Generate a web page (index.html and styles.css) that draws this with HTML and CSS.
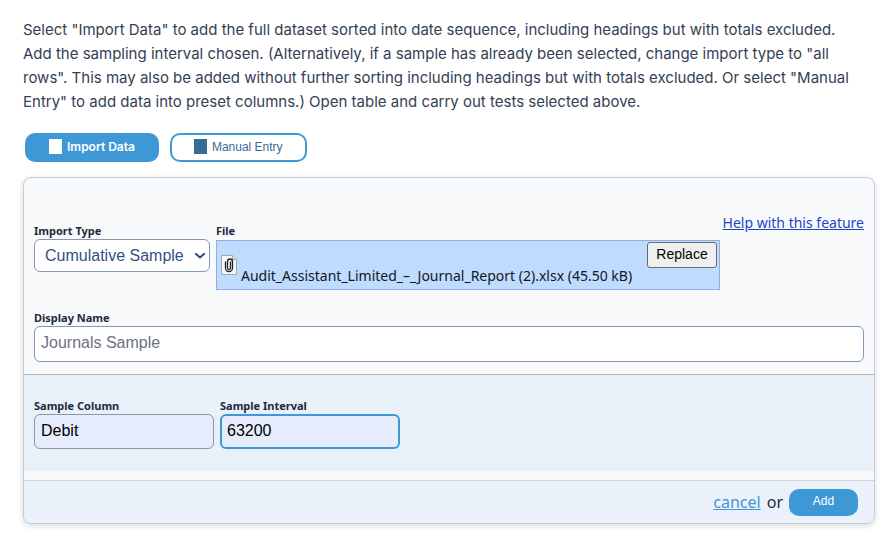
FILE: index.html
```html
<!doctype html>
<html lang="en">
  <head>
    <meta charset="UTF-8" />
    <meta name="viewport" content="width=device-width, initial-scale=1.0" />
    <title>Import Data</title>
    <link rel="stylesheet" href="styles.css">
  </head>
  <body>
    <p class="intro">
      Select "Import Data" to add the full dataset sorted into date sequence, including headings but with totals excluded.<br>
      Add the sampling interval chosen. (Alternatively, if a sample has already been selected, change import type to "all<br>
      rows". This may also be added without further sorting including headings but with totals excluded. Or select "Manual<br>
      Entry" to add data into preset columns.) Open table and carry out tests selected above.
    </p>

    <div class="tabs">
      <button type="button" class="tab active"><span class="tab-icon"></span>Import Data</button>
      <button type="button" class="tab"><span class="tab-icon"></span>Manual Entry</button>
    </div>

    <form class="panel">
      <div class="panel-body">
        <div class="row">
          <div class="field field-type">
            <label for="importType">Import Type</label>
            <div class="select-wrap">
              <select id="importType">
                <option>Cumulative Sample</option>
                <option>All Rows</option>
              </select>
              <svg class="chevron" width="10" height="6" viewBox="0 0 10 6" fill="none" stroke="#2c4a7c" stroke-width="2" stroke-linecap="round" stroke-linejoin="round"><path d="M1 1l4 3.500 4-3.500" /></svg>
            </div>
          </div>
          <div class="field field-file">
            <span class="label">File</span>
            <div class="file-box">
              <svg class="file-icon" width="16" height="20" viewBox="0 0 16 20">
                <path d="M.5.5h11l4 4v15H.5z" fill="#f7f7f7" stroke="#a5a8ad" />
                <path d="M11.5.5v4h4" fill="#ddd" stroke="#a5a8ad" />
                <path d="M4.500 7v6a3.500 3.500 0 0 0 7 0V6.500a2.500 2.500 0 0 0-5 0V13a1.500 1.500 0 0 0 3 0V7" fill="none" stroke="#222" stroke-width="1.300" stroke-linecap="round" />
              </svg>
              <span class="file-name">Audit_Assistant_Limited_–_Journal_Report (2).xlsx (45.50 kB)</span>
              <button type="button" class="replace">Replace</button>
            </div>
          </div>
          <a class="help" href="#help">Help with this feature</a>
        </div>
        <div class="field">
          <label for="displayName">Display Name</label>
          <input type="text" id="displayName" placeholder="Journals Sample">
        </div>
      </div>

      <!-- Sampling options -->
      <div class="sampling">
        <div class="field field-sample">
          <label for="sampleColumn">Sample Column</label>
          <input type="text" id="sampleColumn" value="Debit">
        </div>
        <div class="field field-sample">
          <label for="sampleInterval">Sample Interval</label>
          <input type="text" id="sampleInterval" class="focused" value="63200">
        </div>
      </div>

      <div class="actions">
        <a class="cancel" href="#cancel">cancel</a>
        <span>or</span>
        <button type="submit" class="add">Add</button>
      </div>
    </form>
  </body>
</html>
```
FILE: styles.css
```css
* { box-sizing: border-box; }
body {
  margin: 0;
  padding: 18px 21px 14px 23px;
  background: #fff;
  color: #1e293b;
  font-family: "Lucida Grande", "Noto Sans", sans-serif;
  font-size: 14px;
}
button, input, select { font-family: "Liberation Sans", Arial, sans-serif; }

.intro {
  margin: 0 0 19px;
  color: #334155;
  font-family: Inter, sans-serif;
  font-size: 15px;
  line-height: 24px;
}

/* --- Tabs --- */
.tabs {
  display: flex;
  gap: 11px;
  padding-left: 2px;
  margin-bottom: 15px;
}
.tab {
  display: flex;
  align-items: center;
  gap: 5px;
  height: 29px;
  padding: 0 22px 2px;
  border: 2px solid #3f98d6;
  border-radius: 10px;
  background: #fff;
  color: #366d96;
  font-size: 12px;
}
.tab.active {
  background: #3f98d6;
  color: #fff;
  font-family: Inter, sans-serif;
  font-weight: 600;
}
.tab-icon {
  width: 13px;
  height: 15px;
  background: currentColor;
}

/* --- Panel --- */
.panel {
  overflow: hidden;
  border: 1px solid #c0cddd;
  border-radius: 8px;
  background: #f8f9fb;
  box-shadow: 0 2px 6px rgba(0, 0, 0, 0.15);
}
.panel-body { padding: 34px 10px 12px; }
.row {
  display: flex;
  margin-bottom: 19px;
}
.field { display: flex; flex-direction: column; }
.field label, .label {
  height: 17px;
  font-size: 11px;
  line-height: 17px;
  font-weight: bold;
}
.row .field { flex-shrink: 0; margin-top: 10px; }
.field-type { width: 176px; margin-right: 6px; }
.field-file { width: 504px; }
.select-wrap { position: relative; }
.chevron {
  position: absolute;
  right: 5px;
  top: 14px;
  pointer-events: none;
}
select {
  width: 100%;
  height: 33px;
  padding: 0 10px;
  border: 1px solid #8798b3;
  border-radius: 6px;
  background: #fff;
  color: #34507f;
  font-size: 16px;
  appearance: none;
}
input {
  width: 100%;
  height: 36px;
  padding: 0 6px 2px;
  border: 1px solid #8798b3;
  border-radius: 6px;
  background: #fff;
  color: #000;
  font-size: 16px;
}
input::placeholder { color: #6b7280; opacity: 1; }

.file-box {
  position: relative;
  display: flex;
  align-items: center;
  height: 50px;
  margin-top: 1px;
  padding-left: 4px;
  border: 1px solid #93aee3;
  background: #bfdbfe;
}
.file-name {
  margin: 20px 0 0 4px;
  color: #111827;
  white-space: nowrap;
}
.replace {
  position: absolute;
  top: 1px;
  right: 2px;
  width: 70px;
  height: 26px;
  padding: 0 0 2px;
  border: 1px solid #6b6b6b;
  border-radius: 3px;
  background: #efefef;
  color: #000;
  font-size: 14px;
}
.help {
  margin-left: auto;
  height: 22px;
  color: #1d45c4;
  line-height: 22px;
  white-space: nowrap;
}

/* --- Sampling options --- */
.sampling {
  display: flex;
  gap: 6px;
  padding: 22px 10px;
  border-top: 1px solid #b3b6bb;
  background: #e8f0f8;
}
.field-sample { width: 180px; }
.field-sample input { height: 35px; background: #e6ecfc; }
.field-sample .focused { border: 2px solid #3f98d6; padding: 0 5px 2px; }

/* --- Actions --- */
.actions {
  display: flex;
  justify-content: flex-end;
  align-items: center;
  gap: 6px;
  height: 43px;
  margin-top: 9px;
  padding-right: 16px;
  border-top: 1px solid #d2d3d8;
  background: #eaf1fa;
  font-size: 16px;
}
.cancel { color: #3f98d6; }
.add {
  width: 69px;
  height: 27px;
  padding: 0 0 3px;
  border: none;
  border-radius: 10px;
  background: #3f98d6;
  color: #fff;
  font-size: 12px;
}
```
